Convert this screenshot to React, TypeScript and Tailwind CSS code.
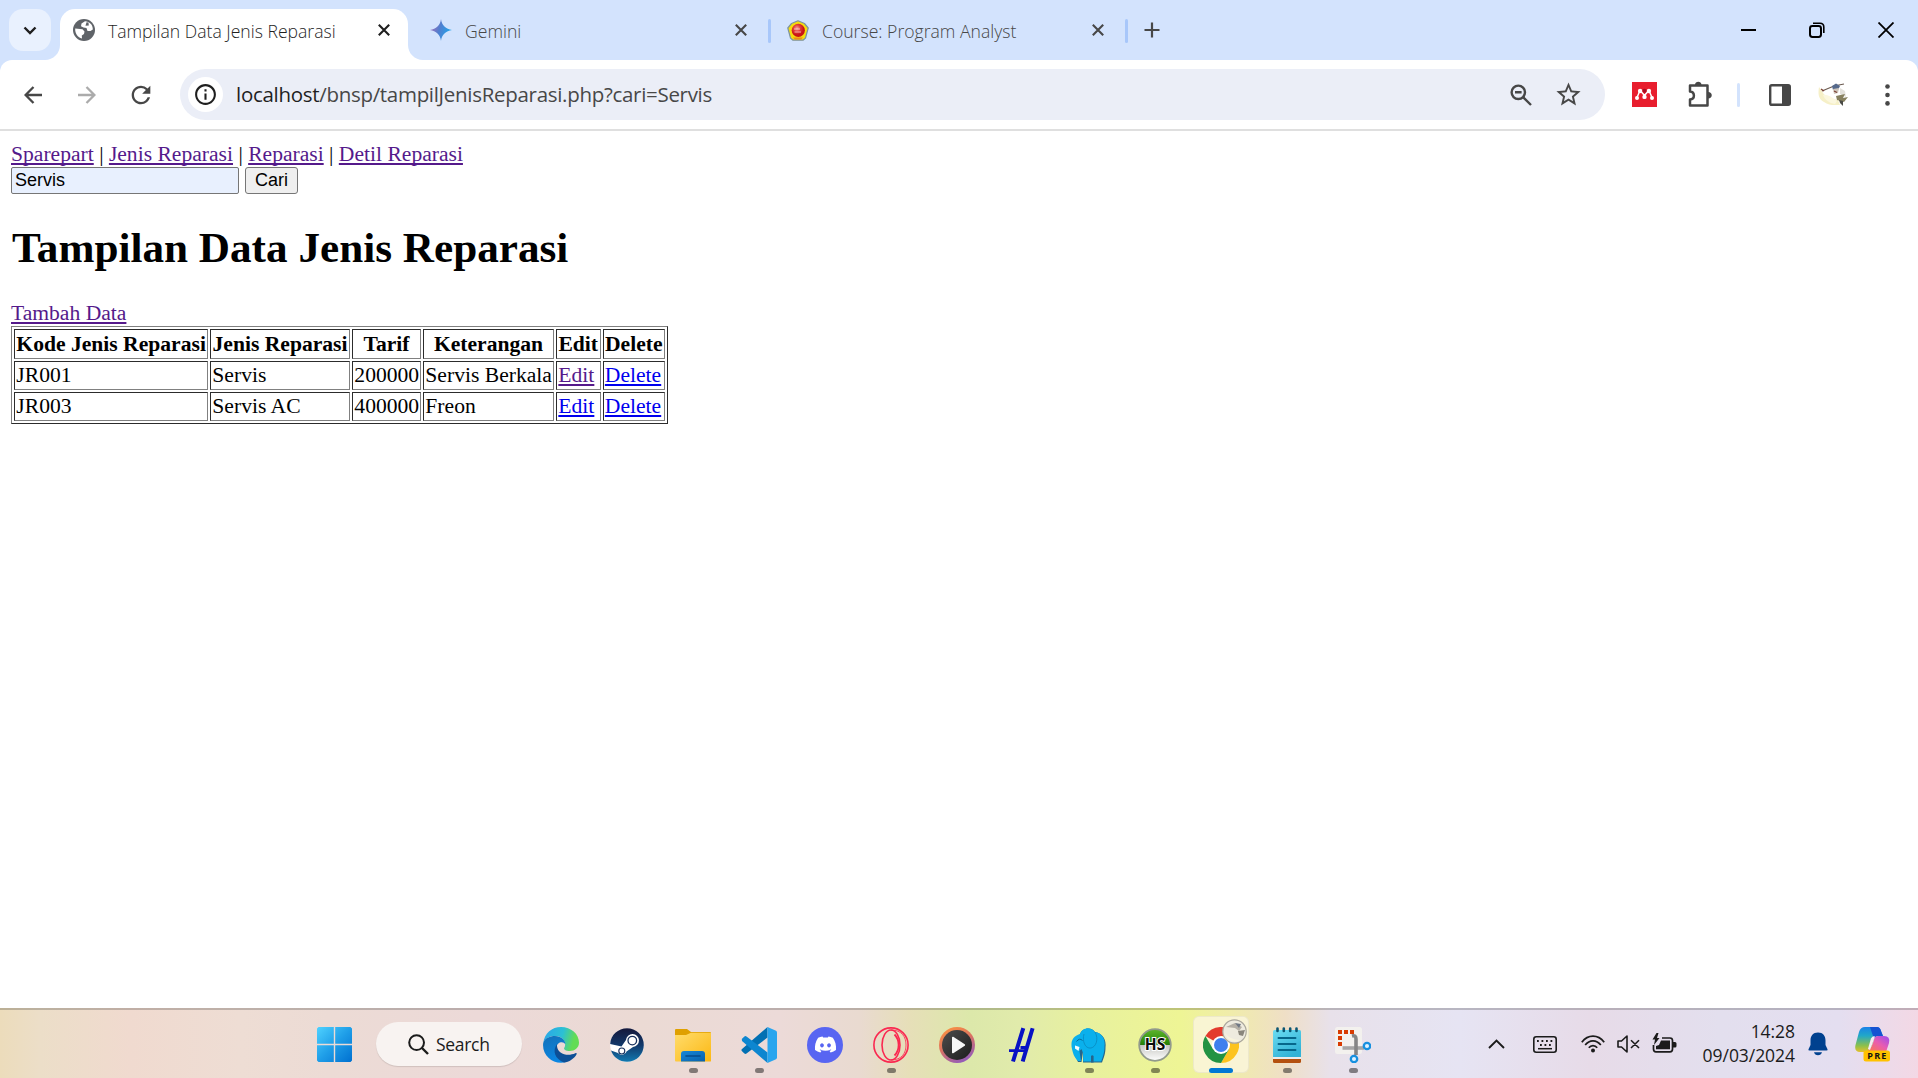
import React from "react";
import { FaDiscord } from "react-icons/fa";
import { MdStarBorder, MdRefresh, MdInfoOutline } from "react-icons/md";

const ui = "font-['Open_Sans','Noto_Sans',sans-serif]";

function Cross({ color }: { color: string }) {
  return (
    <svg width="12" height="12" viewBox="0 0 12 12" stroke={color} strokeWidth="2.1">
      <path d="M0.8 0.8L11.2 11.2M11.2 0.8L0.8 11.2" />
    </svg>
  );
}

function Globe() {
  return (
    <svg className="ml-[13px] shrink-0" width="22" height="22" viewBox="0 0 22 22">
      <circle cx="11" cy="11" r="11" fill="#5f6368" />
      <path d="M12 2.2L8.5 4.5L8 7.2L10.5 8.6L13.5 9L14.5 12H17.5L19.8 10.5C20 5.5 16.5 2.5 12 2.2Z" fill="#fff" />
      <path d="M2.2 9.5L9.5 10.2L11.5 12.5L11 15L8.8 16.5L9 19.6C4.8 18.5 1.8 14.5 2.2 9.5Z" fill="#fff" />
      <path d="M13.5 3.2L15.5 3.5L15.8 6.5L12.5 6.8Z" fill="#5f6368" />
    </svg>
  );
}

function Gemini() {
  return (
    <svg width="22" height="22" viewBox="0 0 22 22">
      <defs>
        <linearGradient id="gem" x1="0" y1="0.3" x2="1" y2="0.6">
          <stop offset="0" stopColor="#a56fb8" />
          <stop offset="0.45" stopColor="#4f7fd0" />
          <stop offset="1" stopColor="#1ba9ee" />
        </linearGradient>
      </defs>
      <path d="M11 0C11.6 6 16 10.4 22 11C16 11.6 11.6 16 11 22C10.4 16 6 11.6 0 11C6 10.4 10.4 6 11 0Z" fill="url(#gem)" />
    </svg>
  );
}

function CourseLogo() {
  return (
    <svg width="22" height="21" viewBox="0 0 22 21">
      <defs>
        <radialGradient id="ball" cx="0.4" cy="0.35">
          <stop offset="0" stopColor="#f7a09a" />
          <stop offset="0.5" stopColor="#e2403c" />
          <stop offset="1" stopColor="#c81414" />
        </radialGradient>
      </defs>
      <path d="M11 0.8L17.5 3.5L21.2 8L18.5 18L16 20.2H6L3.5 18L0.8 8L4.5 3.5Z" fill="#f5dc0c" stroke="#7d93a0" strokeWidth="1.2" strokeLinejoin="round" />
      <path d="M6 17.5H16L14 19.5H8Z" fill="#ee8a1a" />
      <circle cx="11.3" cy="10.3" r="6.6" fill="url(#ball)" />
      <path d="M7 9H13M7.5 12H14" stroke="#fbd0cc" strokeWidth="0.8" />
    </svg>
  );
}

function Avatar() {
  return (
    <svg width="30" height="26" viewBox="0 0 30 26">
      <path d="M1 5C0 11 0 17 6 20C11 24 17 23 22 23L20 18C14 17 6 15 4 9Z" fill="#f6f0c8" />
      <path d="M5 13C9 12 14 15 19 19L17 22C11 21 7 18 5 13Z" fill="#fbf7df" />
      <path d="M4 9L16 4L26 2" stroke="#6b5a50" strokeWidth="1.2" fill="none" />
      <path d="M14 4L18 1.5L22 4L20 8L15 8Z" fill="#566a8c" />
      <path d="M15 7L21 6L20 11L16 12Z" fill="#cfc6bb" />
      <path d="M22 6L27 9L28 15L22 12Z" fill="#e3e1dc" />
      <path d="M18 14L27 12L25 16L30 15L26 20L19 18Z" fill="#86805f" />
      <path d="M21 18L25 19L25 24L22 21Z" fill="#4a4b45" />
      <path d="M3 7L6 9M16 9L19 10.5" stroke="#7c4136" strokeWidth="1.3" />
    </svg>
  );
}

function TabBar() {
  return (
    <div className={`flex h-[60px] bg-[#d3e3fd] ${ui}`}>
      <div className="ml-[9px] mt-[9px] flex h-[42px] w-[42px] items-center justify-center rounded-[14px] bg-[#e9f1fe]">
        <svg width="14" height="9" viewBox="0 0 14 9" fill="none" stroke="#1f1f1f" strokeWidth="2.4">
          <path d="M1.5 1.5L7 7L12.5 1.5" />
        </svg>
      </div>
      <svg className="mt-[45px] h-[15px] w-[15px] -ml-[6px]" viewBox="0 0 15 15">
        <path d="M15 0V15H0C8.3 15 15 8.3 15 0Z" fill="#fff" />
      </svg>
      <div className="mt-[9px] flex h-[51px] w-[348px] items-center rounded-t-[15px] bg-white pb-[9px]">
        <Globe />
        <span className="ml-[13px] mt-[3px] w-[228px] whitespace-nowrap text-[17.6px] font-[350] text-[#1f1f1f]">Tampilan Data Jenis Reparasi</span>
        <span className="ml-[42px]"><Cross color="#1f1f1f" /></span>
      </div>
      <svg className="mt-[45px] h-[15px] w-[15px]" viewBox="0 0 15 15">
        <path d="M0 0V15H15C6.7 15 0 8.3 0 0Z" fill="#fff" />
      </svg>
      <div className="flex h-[60px] w-[345px] items-center">
        <span className="ml-[7px]"><Gemini /></span>
        <span className="ml-[13px] mt-[3px] w-[258px] whitespace-nowrap text-[17.6px] font-[350] text-[#474747]">Gemini</span>
        <span className="ml-[12px]"><Cross color="#474747" /></span>
      </div>
      <div className="mt-[19px] h-6 w-[3px] rounded-full bg-[#a8c7fa]" />
      <div className="flex h-[60px] w-[354px] items-center">
        <span className="ml-[16px]"><CourseLogo /></span>
        <span className="ml-[13px] mt-[3px] w-[258px] whitespace-nowrap text-[17.6px] font-[350] text-[#474747]">Course: Program Analyst</span>
        <span className="ml-[12px]"><Cross color="#474747" /></span>
      </div>
      <div className="mt-[19px] h-6 w-[3px] rounded-full bg-[#a8c7fa]" />
      <svg className="ml-[16px] mt-[22px]" width="16" height="16" viewBox="0 0 16 16" stroke="#474747" strokeWidth="2.2">
        <path d="M8 0.5V15.5M0.5 8H15.5" />
      </svg>
      <div className="ml-auto mr-[24.5px] mt-[22px] flex h-4 items-center gap-[53px]">
        <svg width="15" height="15" viewBox="0 0 15 15"><path d="M0 6H15V8H0Z" fill="#000" /></svg>
        <svg width="16" height="16" viewBox="0 0 16 16" fill="none" stroke="#000" strokeWidth="2">
          <rect x="1" y="4" width="11" height="11" rx="2.4" />
          <path d="M4 1.2H11C13.5 1.2 14.8 2.8 14.8 5V11" strokeWidth="1.6" />
        </svg>
        <svg width="16" height="16" viewBox="0 0 16 16" stroke="#000" strokeWidth="1.8"><path d="M0.5 0.5L15.5 15.5M15.5 0.5L0.5 15.5" /></svg>
      </div>
    </div>
  );
}

function Toolbar() {
  return (
    <div className="bg-[#d3e3fd]">
      <div className={`flex h-[71px] items-center rounded-t-[12px] border-b-2 border-[#dfdfdf] bg-white ${ui}`}>
        <svg className="ml-6" width="18" height="18" viewBox="0 0 18 18" fill="none" stroke="#474747" strokeWidth="2.3">
          <path d="M18 9H2M9.5 1L1.6 9L9.5 17" />
        </svg>
        <svg className="ml-9" width="18" height="18" viewBox="0 0 18 18" fill="none" stroke="#ababab" strokeWidth="2.3">
          <path d="M0 9H16M8.5 1L16.4 9L8.5 17" />
        </svg>
        <MdRefresh className="ml-[31px] h-[28px] w-[28px] text-[#474747]" />
        <div className="ml-[25px] flex h-[51px] w-[1425px] items-center rounded-full bg-[#ebeef7]">
          <div className="ml-2 flex h-[35px] w-[35px] items-center justify-center rounded-full bg-white">
            <MdInfoOutline className="h-[25px] w-[25px] text-[#1f1f1f]" />
          </div>
          <span className="ml-[13px] whitespace-nowrap text-[20.5px] tracking-[-0.3px] text-[#474747]">
            <span className="text-[#1f1f1f]">localhost</span>/bnsp/tampilJenisReparasi.php?cari=Servis
          </span>
          <svg className="ml-auto" width="22" height="22" viewBox="0 0 22 22" fill="none" stroke="#474747" strokeWidth="2.4">
            <circle cx="8.3" cy="8.3" r="6.7" />
            <path d="M13.3 13.3L21 21M5 8.2H11.6" />
          </svg>
          <MdStarBorder className="ml-[22px] mr-[22px] h-[29px] w-[29px] text-[#474747]" />
        </div>
        <svg className="ml-[27px]" width="25" height="25" viewBox="0 0 25 25">
          <path d="M0 0H25V25H0Z" fill="#e81e2e" />
          <path d="M5 15.5L7.6 9.5M8.6 9L12.5 13.6M16.4 9L12.5 13.6M20 15.5L17.4 9.5" fill="none" stroke="#fff" strokeWidth="1.5" />
          <g fill="#fff">
            <circle cx="5" cy="15.9" r="2" /><circle cx="12.5" cy="14.9" r="2.2" /><circle cx="20" cy="15.9" r="2" />
            <circle cx="8.1" cy="9" r="2.2" /><circle cx="16.9" cy="9" r="2.2" />
          </g>
          <circle cx="12.5" cy="8.8" r="2" fill="#a80f22" />
        </svg>
        <svg className="mb-[2px] ml-[30px]" width="26" height="26" viewBox="0 0 26 26">
          <path d="M3 4.5H20.5V24.5H3V18.6C8.2 18.2 8.2 10.8 3 10.4Z" fill="none" stroke="#474747" strokeWidth="2.5" strokeLinejoin="round" />
          <path d="M8 4C8 -0.3 14.5 -0.3 14.5 4ZM21 11C26 11 26 17.5 21 17.5Z" fill="#474747" />
        </svg>
        <div className="ml-[24px] h-6 w-[3px] rounded-full bg-[#d3e3fd]" />
        <svg className="ml-[29px]" width="22" height="22" viewBox="0 0 22 22">
          <rect x="1.2" y="1.2" width="19.6" height="19.6" rx="1.6" fill="none" stroke="#474747" strokeWidth="2.4" />
          <path d="M13 1H21V21H13Z" fill="#474747" />
        </svg>
        <span className="ml-[27px]"><Avatar /></span>
        <svg className="ml-[37px]" width="5" height="22" viewBox="0 0 5 22" fill="#474747">
          <circle cx="2.5" cy="2.5" r="2.3" /><circle cx="2.5" cy="11" r="2.3" /><circle cx="2.5" cy="19.4" r="2.3" />
        </svg>
      </div>
    </div>
  );
}

const visited = "text-[#551a8b] underline decoration-2 underline-offset-[2px] [text-decoration-skip-ink:none]";
const fresh = "text-[#0000ee] underline decoration-2 underline-offset-[2px] [text-decoration-skip-ink:none]";
const cell = "border border-t-[#2c2c2c] border-l-[#2c2c2c] border-b-[#808080] border-r-[#808080] px-[1.35px] pb-[1px] leading-[25px]";

const rows = [
  { kode: "JR001", jenis: "Servis", tarif: "200000", ket: "Servis Berkala", edit: visited },
  { kode: "JR003", jenis: "Servis AC", tarif: "400000", ket: "Freon", edit: fresh },
];

function Page() {
  return (
    <main className="h-[877px] bg-white pl-[11px] pt-[10.8px] font-['Liberation_Serif',serif] text-[21.6px] leading-[25px] text-black">
      <nav className="h-[25px] whitespace-nowrap leading-[24px]">
        <a className={visited}>Sparepart</a> | <a className={visited}>Jenis Reparasi</a> | <a className={visited}>Reparasi</a> | <a className={visited}>Detil Reparasi</a>
      </nav>
      <div className="flex gap-[6px] font-['Liberation_Sans',sans-serif] text-[18px]">
        <div className="flex h-[27px] w-[228px] items-center rounded-[2px] border border-[#767676] bg-[#e8f0fe] pl-[3px]">Servis</div>
        <button className="flex h-[27px] w-[53px] items-center justify-center rounded-[3px] border border-[#767676] bg-[#efefef]">Cari</button>
      </div>
      <h1 className="my-[29px] h-[49px] whitespace-nowrap pl-[1px] text-[43.2px] font-bold leading-[49px]">Tampilan Data Jenis Reparasi</h1>
      <div className="h-[25px] leading-[24px]"><a className={visited}>Tambah Data</a></div>
      <table className="w-[657px] table-fixed border-separate border-spacing-x-[2.4px] border-spacing-y-[2.4px] border border-b-[#2c2c2c] border-l-[#808080] border-r-[#2c2c2c] border-t-[#808080] whitespace-nowrap">
        <colgroup>
          <col className="w-[194px]" />
          <col className="w-[140px]" />
          <col className="w-[69px]" />
          <col className="w-[131px]" />
          <col className="w-[44.5px]" />
          <col />
        </colgroup>
        <thead>
          <tr>
            {["Kode Jenis Reparasi", "Jenis Reparasi", "Tarif", "Keterangan", "Edit", "Delete"].map((h) => (
              <th key={h} className={`${cell} pt-[2px] text-center font-bold`}>{h}</th>
            ))}
          </tr>
        </thead>
        <tbody>
          {rows.map((r) => (
            <tr key={r.kode}>
              <td className={`${cell} pt-[1px]`}>{r.kode}</td>
              <td className={`${cell} pt-[1px]`}>{r.jenis}</td>
              <td className={`${cell} pt-[1px]`}>{r.tarif}</td>
              <td className={`${cell} pt-[1px]`}>{r.ket}</td>
              <td className={`${cell} pt-[1px]`}><a className={r.edit}>Edit</a></td>
              <td className={`${cell} pt-[1px]`}><a className={fresh}>Delete</a></td>
            </tr>
          ))}
        </tbody>
      </table>
    </main>
  );
}

function Windows() {
  return (
    <svg width="35" height="35" viewBox="0 0 35 35">
      <defs>
        <linearGradient id="win" x1="0" y1="0" x2="35" y2="35" gradientUnits="userSpaceOnUse">
          <stop offset="0" stopColor="#4fd2ff" /><stop offset="0.5" stopColor="#1f9ee8" /><stop offset="1" stopColor="#0070d0" />
        </linearGradient>
      </defs>
      <path d="M1.5 0H16.8V16.8H0V1.5ZM18.2 0H33.5L35 1.5V16.8H18.2ZM0 18.2H16.8V35H1.5L0 33.5ZM18.2 18.2H35V33.5L33.5 35H18.2Z" fill="url(#win)" />
    </svg>
  );
}

function Edge() {
  return (
    <svg width="36" height="36" viewBox="0 0 36 36">
      <defs>
        <linearGradient id="eTop" x1="0" y1="0.4" x2="1" y2="0.6">
          <stop offset="0" stopColor="#2aa8e8" /><stop offset="0.5" stopColor="#2cc0d4" /><stop offset="0.85" stopColor="#62dc55" />
        </linearGradient>
        <linearGradient id="eMid" x1="0" y1="0" x2="0.3" y2="1">
          <stop offset="0" stopColor="#1370b8" /><stop offset="1" stopColor="#0b86e2" />
        </linearGradient>
      </defs>
      <path d="M0.3 16C1.5 6 9 0 18 0C28 0 36 7 36 15.5C36 21 31.5 24 27 24C22.5 24 20.5 22.5 21.2 21C24 17 21 9 12 9C6 9 2 12 0.3 16Z" fill="url(#eTop)" />
      <path d="M0.2 16C2 11 7 9 12 9C18 9 22.5 13 22.3 17.5C20.5 13.5 13.5 15 13.5 21C13.5 28 20 33 24 34.8C12 39 -1.5 30 0.2 16Z" fill="url(#eMid)" />
      <path d="M14 17C9 24 12 32 21 35.5C26 35.3 31.5 31.5 33.7 27C33.8 26.2 33 25.9 32.3 26.3C24 30 14.5 26.5 14 19Z" fill="#0d4f96" />
    </svg>
  );
}

function Steam() {
  return (
    <svg width="36" height="36" viewBox="0 0 36 36">
      <defs>
        <linearGradient id="st" x1="0" y1="0" x2="0" y2="1">
          <stop offset="0" stopColor="#15183a" /><stop offset="0.5" stopColor="#12386a" /><stop offset="1" stopColor="#1279b0" />
        </linearGradient>
      </defs>
      <circle cx="18" cy="18" r="16.8" fill="#fff" />
      <path d="M1.2 17C1.6 8 9 1.2 18 1.2A16.8 16.8 0 0 1 18 34.8C10.5 34.8 4 30 2 23.5L9 26A5 5 0 0 0 17.5 24.5L24 20A6.5 6.5 0 1 0 17 13L12.5 19.5Z" fill="url(#st)" />
      <circle cx="23.3" cy="13.6" r="4.3" fill="#fff" stroke="#17305c" strokeWidth="1.3" />
      <circle cx="12.8" cy="24" r="3" fill="none" stroke="#17305c" strokeWidth="1.1" />
    </svg>
  );
}

function Explorer() {
  return (
    <svg width="36" height="34" viewBox="0 0 36 34">
      <defs>
        <linearGradient id="fo" x1="0" y1="0" x2="1" y2="1"><stop offset="0" stopColor="#ffdc6c" /><stop offset="1" stopColor="#fcb813" /></linearGradient>
        <linearGradient id="fb" x1="0" y1="0" x2="1" y2="1"><stop offset="0" stopColor="#1787d8" /><stop offset="1" stopColor="#0861ac" /></linearGradient>
      </defs>
      <path d="M0 2Q0 1 1 1H12L16 4H35Q36 4 36 5V12H0Z" fill="#dfa000" />
      <path d="M0 7H11L16 4.8H36V33Q36 33.5 35 33.5H1Q0 33.5 0 32.5Z" fill="url(#fo)" />
      <path d="M6 33.5V26Q6 23 9 23H27Q30 23 30 26V33.5Z" fill="url(#fb)" />
      <path d="M11 28H25" stroke="#064b8c" strokeWidth="1.6" strokeLinecap="round" />
    </svg>
  );
}

function VSCode() {
  return (
    <svg width="36" height="36" viewBox="0 0 36 36">
      <path d="M1 22L26.5 0V10.5L5.5 26.5Q4.5 27.3 3.4 26.4L0.8 24Q0 23 1 22Z" fill="#0270b3" />
      <path d="M1 14L0.8 12L3.4 9.6Q4.5 8.7 5.5 9.5L26.5 25.5V36Z" fill="#0d86d0" />
      <path d="M26.5 0L35 3.8Q36 4.4 36 5.5V30.5Q36 31.6 35 32.2L26.5 36Z" fill="#28a5ee" />
    </svg>
  );
}

function Opera() {
  return (
    <svg width="36" height="36" viewBox="0 0 36 36" fill="none" stroke="#fa2850">
      <circle cx="18" cy="18" r="17.1" strokeWidth="1.6" />
      <ellipse cx="18" cy="18" rx="9" ry="15" strokeWidth="1.6" />
      <path d="M18 3C29 3 33 10 33 18S29 33 18 33" strokeWidth="0.8" />
      <path d="M21.5 7.5C27 13 27 23 21.5 28.5" strokeWidth="1.8" />
    </svg>
  );
}

function Media() {
  return (
    <svg width="36" height="36" viewBox="0 0 36 36">
      <defs>
        <linearGradient id="mp" x1="0.2" y1="0" x2="0.7" y2="1"><stop offset="0" stopColor="#fb9341" /><stop offset="0.45" stopColor="#dd735f" /><stop offset="1" stopColor="#8e5ac0" /></linearGradient>
        <linearGradient id="mpi" x1="0" y1="0" x2="1" y2="1"><stop offset="0" stopColor="#4c4c4c" /><stop offset="1" stopColor="#1d1d1d" /></linearGradient>
      </defs>
      <circle cx="18" cy="18" r="18" fill="url(#mp)" />
      <circle cx="18" cy="18" r="15" fill="url(#mpi)" />
      <path d="M13.8 10.5L25.3 18L13.8 25.5Z" fill="#f7f7f7" stroke="#f7f7f7" strokeWidth="1.6" strokeLinejoin="round" />
    </svg>
  );
}

function Slashes() {
  return (
    <svg width="36" height="36" viewBox="0 0 36 36" fill="none" stroke="#0812c4">
      <path d="M18.3 1.2L8 34.5M27.6 1.2L17.7 34.5" strokeWidth="4" />
      <path d="M4 23.6H20M15.5 20.5H22" strokeWidth="2.8" />
    </svg>
  );
}

function Elephant() {
  return (
    <svg width="36" height="36" viewBox="0 0 36 36">
      <path d="M9 7C11 1 20 -1 24 5C31 6 35.5 12 34.5 20C34.5 27 33 30 31 35.5H12L12 25L10.5 35H7C4 28 2 26 2 20Z" fill="#24658c" />
      <path d="M0.8 21C-0.5 14 2 9 9 7C11 0.5 20 -1 24 5C31 6 34.5 12 33.5 19C33.5 26 32 29 30.2 34.5H12.2L12 26L10.5 22L8.5 24L10 34H7C3 30 1.8 26 0.8 21Z" fill="#0ab0ec" />
      <path d="M20 29Q21.3 27.6 22.6 29V35.5H20Z" fill="#24658c" />
      <path d="M13 7C11 14 14 22 20 21C25 20 28 12 24 5" fill="none" stroke="#098cc3" strokeWidth="0.9" />
      <path d="M4 18.5L8.5 20L7.5 24L4 21.5Z" fill="#f2fcff" />
      <path d="M5.5 14.5Q8.5 10.5 11.5 13.5" fill="none" stroke="#086a98" strokeWidth="1" />
    </svg>
  );
}

function HeidiSQL() {
  return (
    <svg width="34" height="34" viewBox="0 0 34 34">
      <defs>
        <linearGradient id="hg" x1="0" y1="0" x2="0" y2="1"><stop offset="0" stopColor="#5fb52e" /><stop offset="0.4" stopColor="#2f8e0c" /><stop offset="0.5" stopColor="#267a08" /><stop offset="0.51" stopColor="#c8c8c4" /><stop offset="1" stopColor="#ffffff" /></linearGradient>
      </defs>
      <circle cx="17" cy="17" r="15.8" fill="url(#hg)" stroke="#929a8c" strokeWidth="1.8" />
      <text x="17" y="22.3" textAnchor="middle" fontFamily="Open Sans, sans-serif" fontSize="15.5" fontWeight="700" fill="#0a0a0a" stroke="#fff" strokeWidth="2" paintOrder="stroke">HS</text>
    </svg>
  );
}

function Chrome() {
  return (
    <svg width="36" height="36" viewBox="0 0 36 36">
      <path d="M18 18L2.4 9A18 18 0 0 1 33.6 9H18Z" fill="#e33b2e" />
      <path d="M33.6 9H18V18L25.8 22.5L18 36A18 18 0 0 0 33.6 9Z" fill="#fcc31e" />
      <path d="M2.4 9A18 18 0 0 0 18 36L25.8 22.5L18 18L10.2 22.5Z" fill="#229342" />
      <circle cx="18" cy="18" r="9" fill="#fff" />
      <circle cx="18" cy="18" r="7" fill="#3e7fee" />
    </svg>
  );
}

function Badge() {
  return (
    <svg width="25" height="25" viewBox="0 0 25 25">
      <circle cx="12.5" cy="12.5" r="11.7" fill="#eeebdf" stroke="#aaa79c" strokeWidth="1.2" />
      <path d="M2 13Q8 21 18 21Q13 25 6 20Z" fill="#f8f4dd" />
      <path d="M4 8L13 4L20 8L17 12L13 9Z" fill="#b5b0a6" />
      <path d="M13 4L19 5L17 9Z" fill="#707884" />
      <path d="M16 12L23 11L21 17L17 16Z" fill="#89867c" />
    </svg>
  );
}

function Notepad() {
  return (
    <svg width="28" height="36" viewBox="0 0 28 36">
      <defs><linearGradient id="np" x1="0" y1="0" x2="0.6" y2="1"><stop offset="0" stopColor="#6bdcf2" /><stop offset="1" stopColor="#32b2d6" /></linearGradient></defs>
      <path d="M0 31H28V34.5Q28 36 26.5 36H1.5Q0 36 0 34.5Z" fill="#b4500f" />
      <path d="M0 28H28V32H0Z" fill="#ececec" />
      <path d="M0 4.5Q0 3 1.5 3H26.5Q28 3 28 4.5V30H0Z" fill="url(#np)" />
      <path d="M5.5 11H22.5M5.5 17H22.5M5.5 23H22.5" stroke="#06678b" strokeWidth="1.9" strokeLinecap="round" />
      <path d="M4.5 1.5V4M10.8 1.5V4M17.2 1.5V4M23.5 1.5V4" stroke="#0b5673" strokeWidth="2.6" strokeLinecap="round" />
    </svg>
  );
}

function Snip() {
  return (
    <svg width="36" height="36" viewBox="0 0 36 36">
      <rect x="0" y="0" width="27" height="27" rx="2.5" fill="#f3f1ee" />
      <path d="M3 3H7V7H3ZM9 3H13V7H9ZM15 3H19V7H15ZM3 9H7V13H3ZM3 15H7V19H3Z" fill="#d83b01" />
      <path d="M7.5 21H29" stroke="#a6a6a6" strokeWidth="3.6" />
      <path d="M17 9Q21 8 21 12V28" fill="none" stroke="#858585" strokeWidth="3.6" />
      <circle cx="32" cy="19" r="3.2" fill="#dff2ff" stroke="#1790df" strokeWidth="2.3" />
      <circle cx="19" cy="32" r="3.2" fill="#dff2ff" stroke="#1790df" strokeWidth="2.3" />
    </svg>
  );
}

function Copilot() {
  return (
    <svg width="36" height="35" viewBox="0 0 36 35">
      <defs>
        <linearGradient id="ca" x1="0" y1="0" x2="0" y2="1"><stop offset="0" stopColor="#1a82e8" /><stop offset="0.35" stopColor="#21a8c8" /><stop offset="0.75" stopColor="#8ec04a" /><stop offset="1" stopColor="#e5c02c" /></linearGradient>
        <linearGradient id="cb" x1="1" y1="0" x2="0.1" y2="1"><stop offset="0" stopColor="#9a4cf0" /><stop offset="0.5" stopColor="#e95cb0" /><stop offset="1" stopColor="#fb7850" /></linearGradient>
      </defs>
      <path d="M10 0H22Q25 0 26 4L28 9H23Q20 9 19 12L15 25H5Q-1 25 0.5 18L4 5Q5.5 0 10 0Z" fill="url(#ca)" />
      <path d="M15 0H22Q25 0 26 4L28 9H23Q20 9 19 12Z" fill="#1553d2" />
      <path d="M23 9H29Q35.5 9 34 16L31 25H15Q12 25 14 22Q17 20 18 16L19.5 11Q20.5 9 23 9Z" fill="url(#cb)" />
      <path d="M15 23L20 9.5Q17 8.5 15.5 13L13 22Z" fill="#f7ecf4" />
      <rect x="8.5" y="23.5" width="26.5" height="11" rx="2.5" fill="#ffc200" />
      <text x="21.8" y="32" textAnchor="middle" fontFamily="Open Sans, sans-serif" fontSize="9" fontWeight="700" fill="#111" textLength="19">PRE</text>
    </svg>
  );
}

const apps: { name: string; icon: React.ReactNode; open?: boolean }[] = [
  { name: "edge", icon: <Edge /> },
  { name: "steam", icon: <Steam /> },
  { name: "explorer", icon: <Explorer />, open: true },
  { name: "vscode", icon: <VSCode />, open: true },
  {
    name: "discord",
    icon: <span className="flex h-9 w-9 items-center justify-center rounded-full bg-[#5865f2]"><FaDiscord className="h-[23px] w-[23px] text-white" /></span>,
  },
  { name: "opera", icon: <Opera />, open: true },
  { name: "media", icon: <Media /> },
  { name: "slashes", icon: <Slashes /> },
  { name: "elephant", icon: <Elephant />, open: true },
  { name: "heidi", icon: <HeidiSQL />, open: true },
  { name: "chrome", icon: <Chrome /> },
  { name: "notepad", icon: <Notepad />, open: true },
  { name: "snip", icon: <Snip />, open: true },
];

function Taskbar() {
  return (
    <footer className={`flex h-[70px] border-t-2 border-black/20 bg-[linear-gradient(90deg,#ecdcbb_0px,#ecdec8_40px,#f0dacf_130px,#eeddd4_240px,#ecdbd5_330px,#ecd9d8_480px,#ebdad4_640px,#ecdad8_780px,#e9dad0_860px,#e6dfb8_910px,#dce8aa_970px,#e1ebab_1020px,#e8f19e_1090px,#eef595_1180px,#f0ecaa_1230px,#efdfc6_1285px,#e8e1ea_1330px,#e6e4f3_1460px,#e7dbe8_1590px,#e3dfee_1720px,#e4def0_1840px,#f3d8e5_1918px)] bg-origin-border ${ui} text-[#1b1b1b]`}>
      <div className="ml-[317px] mt-[17px] h-[35px]"><Windows /></div>
      <div className="ml-6 mt-[12px] flex h-[44px] w-[146px] items-center rounded-full bg-[#f8f3f1] shadow-[0_1px_1px_rgba(0,0,0,0.12)]">
        <svg className="ml-8" width="21" height="21" viewBox="0 0 21 21" fill="none" stroke="#1b1b1b" strokeWidth="2">
          <circle cx="8.6" cy="8.6" r="7.4" /><path d="M14 14L20 20" strokeWidth="2.4" />
        </svg>
        <span className="ml-[7px] mt-[1px] text-[17.5px] tracking-[-0.3px]">Search</span>
      </div>
      <div className="ml-[6px] flex">
        {apps.map((a) => (
          <div key={a.name} className="flex w-[66px] flex-col items-center">
            <div className={a.name === "chrome" ? "relative mt-[6px] flex h-[57px] w-[56px] items-center justify-center rounded-[6px] border border-black/5 bg-[#faf6dc]/85" : "mt-[6px] flex h-[57px] w-[56px] items-center justify-center"}>
              <div className="flex h-9 w-9 items-center justify-center">{a.icon}</div>
              {a.name === "chrome" && <span className="absolute right-[1px] top-[2px]"><Badge /></span>}
            </div>
            {a.open && <div className="-mt-[5px] h-[5px] w-[9px] rounded-full bg-black/45" />}
            {a.name === "chrome" && <div className="relative -mt-[5px] h-[5px] w-6 rounded-full bg-[#0078d4]" />}
          </div>
        ))}
      </div>
      <div className="ml-auto flex h-[68px] items-center">
        <svg width="17" height="10" viewBox="0 0 17 10" fill="none" stroke="#1b1b1b" strokeWidth="1.9"><path d="M1 9L8.5 1.5L16 9" /></svg>
        <svg className="ml-[28px]" width="24" height="17" viewBox="0 0 24 17" fill="none" stroke="#1b1b1b">
          <rect x="0.8" y="0.8" width="22.4" height="15.4" rx="2.4" strokeWidth="1.6" />
          <path d="M4 5H20M7 9H18" strokeWidth="1.8" strokeDasharray="1.8 2.7" /><path d="M5 12.7H19" strokeWidth="1.5" />
        </svg>
        <svg className="ml-6" width="24" height="18" viewBox="0 0 24 18" fill="none" stroke="#1b1b1b" strokeWidth="1.7">
          <path d="M0.8 7.2C7 -0.8 17 -0.8 23.2 7.2M4.2 10C8.5 4.4 15.5 4.4 19.8 10M7.8 12.7C10 9.8 14 9.8 16.2 12.7" /><circle cx="12" cy="15.6" r="2" fill="#1b1b1b" stroke="none" />
        </svg>
        <svg className="ml-3" width="23" height="18" viewBox="0 0 23 18" fill="none" stroke="#1b1b1b" strokeWidth="1.6" strokeLinejoin="round">
          <path d="M1 6H4.5L10 1V17L4.5 12H1ZM14 5.2L22 13M22 5.2L14 13" />
        </svg>
        <svg className="mb-[3px] ml-[12px]" width="25" height="20" viewBox="0 0 25 20">
          <path d="M10 5H18Q20.5 5 20.5 7.5V16Q20.5 18.8 18 18.8H4Q1.5 18.8 1.5 16V12" fill="none" stroke="#1b1b1b" strokeWidth="1.7" />
          <path d="M21 9H23Q24.5 9 24.5 10.5V13Q24.5 14.5 23 14.5H21ZM9 7.5H18V16.3H4V13L7 12Z" fill="#1b1b1b" />
          <path d="M4.5 0L0.5 6.5H3L2 12L7.5 5H5L6.5 0Z" fill="#1b1b1b" />
        </svg>
        <div className="ml-[25px] mt-[-2px] w-[93px] whitespace-nowrap text-right text-[17.5px] leading-6 tracking-[-0.05px]">
          <div>14:28</div>
          <div>09/03/2024</div>
        </div>
        <svg className="ml-[13px]" width="20" height="24" viewBox="0 0 20 24" fill="#00418f">
          <path d="M10 0.5C5 0.5 2.5 4 2.5 8.5V13L0.5 17.2Q0 18.5 1.5 18.5H18.5Q20 18.5 19.5 17.2L17.5 13V8.5C17.5 4 15 0.5 10 0.5ZM6 20.3H14C13.5 22.3 12 23.3 10 23.3S6.5 22.3 6 20.3Z" />
        </svg>
        <span className="ml-[27px] mr-[27px]"><Copilot /></span>
      </div>
    </footer>
  );
}

export default function App() {
  return (
    <div className="h-[1078px] w-[1918px] overflow-hidden bg-white">
      <TabBar />
      <Toolbar />
      <Page />
      <Taskbar />
    </div>
  );
}
